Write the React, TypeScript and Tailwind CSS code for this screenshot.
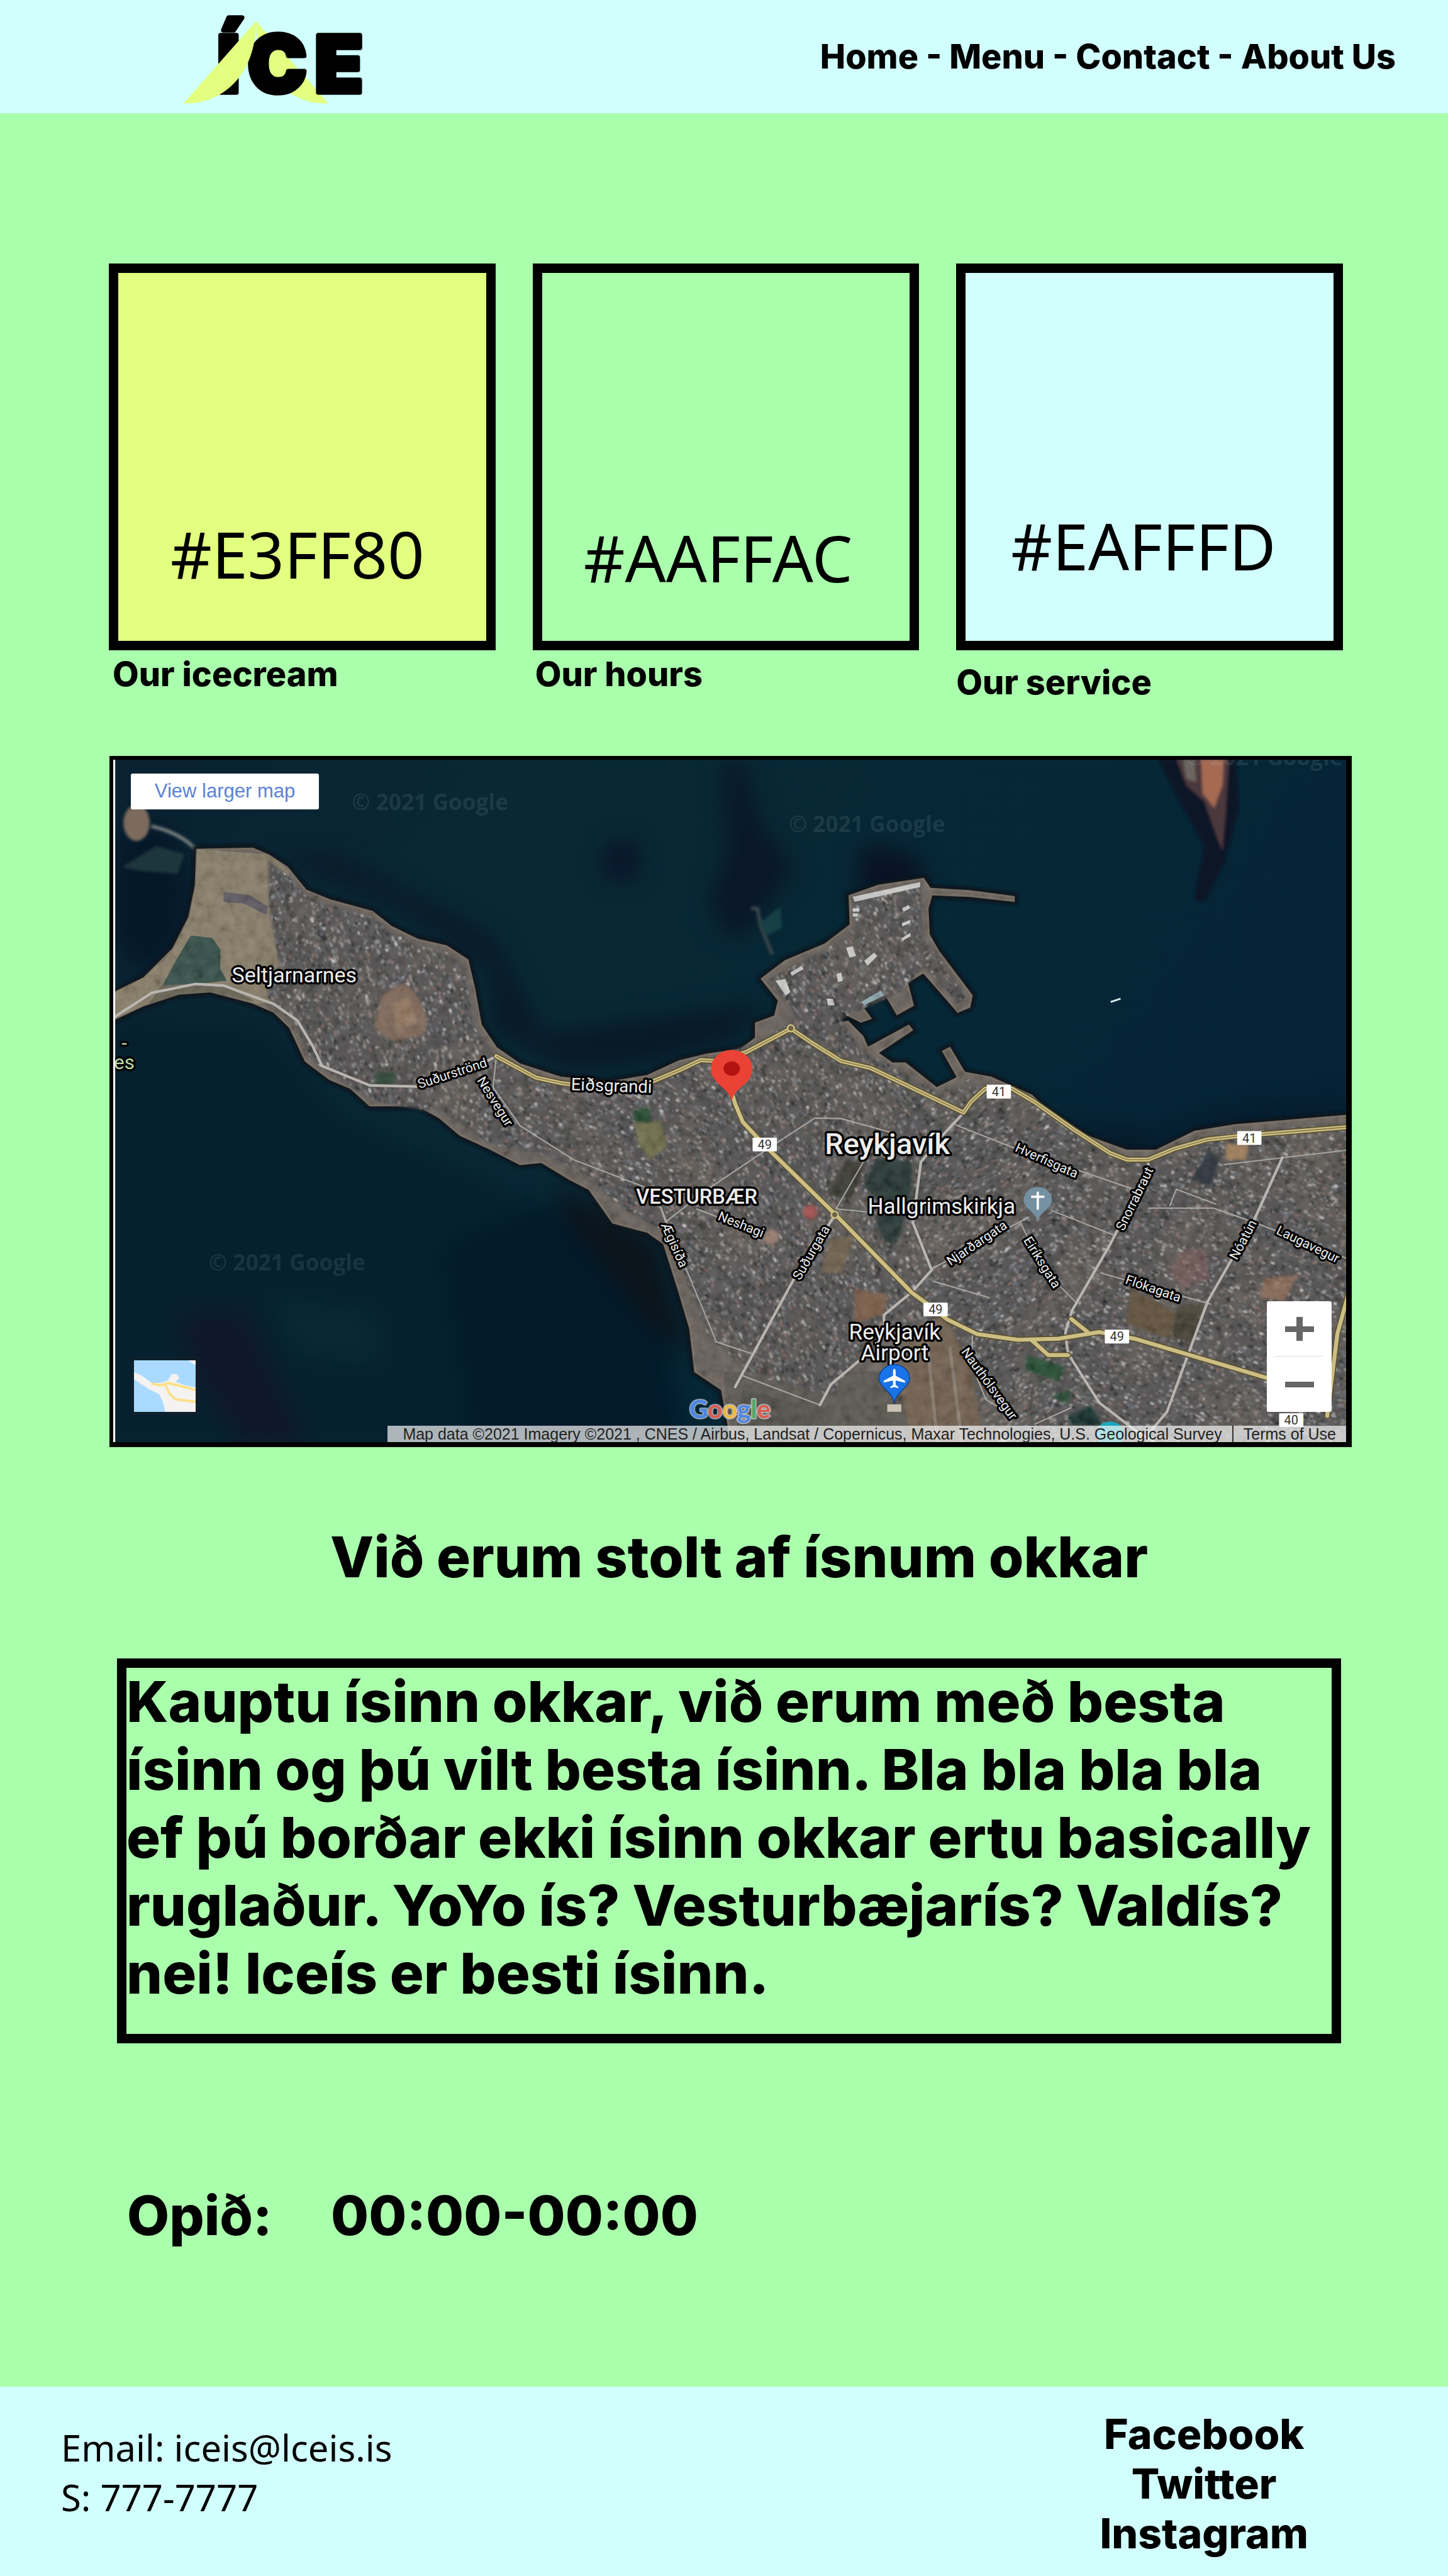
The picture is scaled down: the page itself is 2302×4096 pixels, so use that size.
import React from "react";

type Swatch = { hex: string; caption: string; box: string; label: string };

const swatches: Swatch[] = [
  { hex: "#E3FF80", caption: "Our icecream", box: "bg-[#E2FF80] pl-[83px] pb-[78px]", label: "mt-2 pl-[6px]" },
  { hex: "#AAFFAC", caption: "Our hours", box: "bg-[#AAFFAC] pl-[66px] pb-[72px]", label: "mt-2 pl-[4px]" },
  { hex: "#EAFFFD", caption: "Our service", box: "bg-[#D1FFFD] pl-[72px] pb-[91px]", label: "mt-[21px]" },
];

const navItems = ["Home", "Menu", "Contact", "About Us"];
const socials = ["Facebook", "Twitter", "Instagram"];

function Logo() {
  return (
    <svg viewBox="160 60 1220 630" className="h-[151px] w-[293px] overflow-visible" role="img" aria-label="ÍCE">
      <path d="M647 138 L1128 684 C874 690 647 500 647 138Z" fill="#E2FF80" />
      <g
        fontFamily="Inter, sans-serif"
        fontWeight="900"
        fontSize="524"
        fill="#000"
        stroke="#000"
        strokeWidth="32"
        strokeLinejoin="round"
        textAnchor="middle"
      >
        <text x="464" y="610">Í</text>
        <text x="788" y="610">C</text>
        <text x="1197" y="610">E</text>
      </g>
      <path d="M647 138 L166 684 C420 690 647 500 647 138Z" fill="#E2FF80" />
    </svg>
  );
}

/* ---------- Satellite map ---------- */

const coast =
  "M66 606 L87.5 595.4 L105.3 577.6 L115 558.4 L119 539 L119.8 517.3 L132.7 517 L153.7 516.6 L163.4 520.7 L174.7 528 L186 542 L200.6 548 L226.4 555 L237.7 564 L254 572 L271.6 576 L284.5 584.4 L288.6 602 L292.6 624 L302 638 L316.5 648 L341 656 L370 659 L394 655 L413.5 646 L430 642 L450.6 639 L460 632 L460 623 L471.6 618.7 L474 609 L463.6 596 L478 585 L502 575 L517.7 563 L517 545.4 L534.6 539.2 L562 535 L566 541 L590 542.5 L617 546 L617 548.5 L590 545.5 L567 544.5 L564.5 553 L565.3 569 L571 579 L591.4 606 L590 613 L583 616 L570 601 L562 592 L552 598 L555.6 612 L546 617.3 L539.5 606.3 L523.3 611 L529.8 620 L524 622 L512 616 L506 624 L516 622 L525 631 L528 638 L553 624.5 L555 627 L534 641 L543 647.4 L551 647.4 L570 662.5 L583 656 L574 640 L578 638 L587 653 L603 656 L612 660 L628 667 L636 675 L661 691.5 L685.5 700.5 L703.7 700.5 L727 689 L751.6 685 L822 679 L822 882 L446 882 L439.3 846 L423 835 L420 809 L413.5 787 L404 757 L394 750 L373 744.4 L358.6 724 L347 718 L329.5 707.4 L316.5 708.8 L297.5 699 L280 691 L267 680 L254 673 L225 673 L213.5 662.5 L200.6 657 L186 646 L176.4 625.5 L166.7 616 L153.7 610.4 L128 603.6 L108.5 605 L87.5 612 L66 622Z";

const urban =
  "M163 524 L174 532 L186 545 L200 551 L226 558 L238 567 L254 575 L271 579 L282 587 L285 603 L289 626 L300 641 L316 652 L341 660 L370 663 L394 659 L430 645 L462 634 L484 620 L478 609 L466 597 L502 578 L520 565 L519 547 L560 538 L562 570 L588 606 L584 612 L562 588 L548 604 L512 620 L524 640 L545 650 L570 665 L590 657 L628 670 L661 695 L686 704 L704 704 L727 693 L752 689 L822 683 L822 882 L600 882 L590 830 L575 800 L545 812 L520 830 L505 850 L452 836 L430 812 L418 780 L408 752 L380 736 L352 713 L330 703 L300 697 L270 678 L226 670 L205 656 L190 646 L180 625 L162 606 L170 588 L164 553Z";

const buildingColors = [
  { color: "#9c9a98", share: 0.17 },
  { color: "#cccccc", share: 0.06 },
  { color: "#7d7b79", share: 0.2 },
  { color: "#262b2d", share: 0.22 },
  { color: "#383d36", share: 0.14 },
  { color: "#7d6560", share: 0.1 },
  { color: "#636b74", share: 0.12 },
];

function makeRandom(seed: number) {
  let s = seed;
  return () => {
    s = (s * 1664525 + 1013904223) % 4294967296;
    return s / 4294967296;
  };
}

// One path per roof colour; blocks follow the street direction of their quarter.
const buildingPaths = buildingColors.map(({ color, share }, i) => {
  const rnd = makeRandom(97 + i * 31);
  const count = Math.round(32000 * share);
  let d = "";
  for (let n = 0; n < count; n++) {
    const x = 160 + rnd() * 662;
    const y = 524 + rnd() * 356;
    const angle = x < 300 ? 1.2 : x < 440 ? 0.5 : x < 560 ? 1.05 : x < 640 ? -0.5 : 0.35;
    const w = 0.9 + rnd() * 2.1;
    const h = 0.6 + rnd() * 1.1;
    const cx = Math.cos(angle);
    const sx = Math.sin(angle);
    d += `M${x.toFixed(1)} ${y.toFixed(1)}l${(cx * w).toFixed(2)} ${(sx * w).toFixed(2)}l${(-sx * h).toFixed(2)} ${(cx * h).toFixed(2)}l${(-cx * w).toFixed(2)} ${(-sx * w).toFixed(2)}z`;
  }
  return { color, d };
});

const mainRoads = [
  "M302 643 L326 656 L342 659.5 L370 663 L397 658.4 L413.5 651.5 L426.4 645.4 L436 646 L454 640.6 L481.3 626.2 L494.3 635 L512 646 L529.8 650.2 L570 669.4 L586.4 677.3 L591 670.7 L599.6 662.8 L616 662.8 L629.4 670.7 L652.5 687 L675.6 702 L686 706 L698.8 706 L715.3 699.2 L735 693.7 L753.3 691.7 L822 686",
  "M445 664 L447.4 672 L452 683 L465 697 L508 739 L555 787 L566 795 L576.5 803.3 L594.7 812.2 L619.5 815.7 L644.2 815 L669 811 L690.5 815 L771.4 839 L800 850",
  "M822 783 L814 812 L807.8 862",
  "M628 816 L638 825 L650 825 M652 803 L662 811",
];

const wideStreets = [
  "M508 740 L484.6 776 L447.4 844.4",
  "M698.8 707 L698.8 711.5 L676 757 L652.5 797.8 L648.4 811.5 L650 824 L669 854 L690.5 870.5 L706 880",
  "M780.5 704.7 L763.2 743 L735 792.4 L710.3 859.5 L698 874",
  "M586 678 L572 693 L560.5 707.4 L555.6 744.4 L567 773.2 L555.6 786 L538 800.6 L538 806",
  "M499 855.4 L505.6 843 L523.3 828",
  "M69 619.5 L92.4 604.4 L119 599 L136 600 L166.7 611.3 L181 621.4 L190 636.5 L196 649 L225 660.8 L254 661.5 L283 653 L302 643",
];

const smallStreets = [
  "M402 734.8 L416.7 770.4 L436 817 L457 824",
  "M302 643 L300 662 L316.6 685.5 L349 706 L395.7 724 L402 735 L405 744 L430 724.5 L471.6 696.5 L495.9 680.7 L512 681 L542.7 689.6",
  "M452 837.6 L499 855.4",
  "M528 703 L508.8 736 L530 738",
  "M698.8 735.5 L738.4 735.5 L763 744 L822 767",
  "M712 734 L716 724 L740 733",
  "M745 709 L822 700",
  "M582 685 L620 700 L690 724",
  "M640 737 L678 752 M568 772 L626 741",
  "M621 744 L634 772 L655 793",
  "M568 780 L602 790 M670 775 L737 794",
  "M592 812 L591 830 L600 852 L616 862",
  "M424 736 L447 745 L462 754",
  "M630 867 L652 857",
];

type MapLabel = { text: string; x: number; y: number; size: number; rotate?: number; weight?: number };

const mapLabels: MapLabel[] = [
  { text: "Seltjarnarnes", x: 179, y: 598, size: 13 },
  { text: "Reykjavík", x: 540, y: 702.5, size: 18, weight: 500 },
  { text: "VESTURBÆR", x: 424, y: 733, size: 12.5, weight: 500 },
  { text: "Hallgrimskirkja", x: 573, y: 739, size: 13.5 },
  { text: "Reykjavík", x: 544.5, y: 815.5, size: 13.5 },
  { text: "Airport", x: 544.5, y: 828, size: 13.5 },
  { text: "Eiðsgrandi", x: 372, y: 664.5, size: 10.5, rotate: 2 },
  { text: "Suðurströnd", x: 276, y: 656, size: 8, rotate: -18 },
  { text: "Nesvegur", x: 299, y: 672, size: 8, rotate: 58 },
  { text: "Neshagi", x: 450, y: 748, size: 8, rotate: 22 },
  { text: "Ægisíða", x: 408, y: 759, size: 8, rotate: 66 },
  { text: "Suðurgata", x: 496, y: 764, size: 8, rotate: -60 },
  { text: "Hverfisgata", x: 636, y: 709, size: 8, rotate: 24 },
  { text: "Snorrabraut", x: 693, y: 731, size: 8, rotate: -64 },
  { text: "Njarðargata", x: 596, y: 759, size: 8, rotate: -34 },
  { text: "Eiríksgata", x: 632, y: 770, size: 8, rotate: 58 },
  { text: "Nóatún", x: 759, y: 756, size: 8, rotate: -62 },
  { text: "Flókagata", x: 701, y: 787, size: 8, rotate: 19 },
  { text: "Laugavegur", x: 795, y: 760, size: 8, rotate: 26 },
  { text: "Nauthólsvegur", x: 600, y: 844, size: 8, rotate: 54 },
];

const shields = [
  { text: "49", x: 458, y: 692.6 },
  { text: "41", x: 600.5, y: 660.4 },
  { text: "41", x: 753, y: 688.6 },
  { text: "49", x: 562, y: 793 },
  { text: "49", x: 672.4, y: 809.5 },
  { text: "40", x: 778.5, y: 860.4 },
];

const watermarks = [
  { x: 214, y: 493 },
  { x: 480, y: 506.5 },
  { x: 127, y: 773.5 },
  { x: 722, y: 466 },
];

function SatelliteMap() {
  return (
    <svg viewBox="68.8 462.5 750.5 415.5" className="block h-auto w-full" role="img" aria-label="Satellite map of Reykjavík">
      <defs>
        <linearGradient id="sea" x1="0" y1="0" x2="1" y2="0.4">
          <stop offset="0" stopColor="#0a2131" />
          <stop offset="0.35" stopColor="#092835" />
          <stop offset="0.7" stopColor="#062736" />
          <stop offset="1" stopColor="#052437" />
        </linearGradient>
        <filter id="soft" x="-30%" y="-30%" width="160%" height="160%" colorInterpolationFilters="sRGB">
          <feGaussianBlur stdDeviation="7" />
        </filter>
        <filter id="edge" x="-10%" y="-10%" width="120%" height="120%">
          <feGaussianBlur stdDeviation="0.9" />
        </filter>
        <filter id="haze">
          <feGaussianBlur stdDeviation="0.35" />
        </filter>
        <filter id="grain" x="0" y="0" width="100%" height="100%">
          <feTurbulence type="fractalNoise" baseFrequency="0.16" numOctaves="3" seed="8" />
          <feColorMatrix values="0.9 0.5 0.2 0 -0.42  0.9 0.5 0.2 0 -0.42  0.9 0.5 0.2 0 -0.42  0 0 0 0 0.5" />
        </filter>
        <filter id="patches" x="0" y="0" width="100%" height="100%">
          <feTurbulence type="fractalNoise" baseFrequency="0.022" numOctaves="3" seed="21" />
          <feColorMatrix values="0 0 0 0 0.2  0 0 0 0 0.16  0 0 0 0 0.12  3 0 0 0 -1.35" />
        </filter>
        <clipPath id="coastClip"><path d={coast} /></clipPath>
        <clipPath id="urbanClip"><path d={urban} /></clipPath>
      </defs>

      <rect x="60" y="455" width="770" height="430" fill="url(#sea)" />
      <g filter="url(#soft)">
        <path d="M60 620 L160 625 L210 680 L290 715 L350 740 L400 790 L420 880 L250 880 L60 880Z" fill="#06202f" />
        <path d="M330 735 L395 765 L415 880 L290 880 L270 760Z" fill="#021a2a" />
        <ellipse cx="90" cy="545" rx="24" ry="45" fill="#05182a" />
        <path d="M170 520 L240 550 L300 590 L300 625 L345 650 L400 645 L450 630 L465 610 L440 615 L330 630 L300 570 L200 520Z" fill="#0a1826" />
        <path d="M440 462 L452 462 L462 500 L484 530 L470 545 L455 570 L440 568 L432 548 L443 520Z" fill="#0a1728" />
        <ellipse cx="378" cy="524" rx="11" ry="13" fill="#0b1329" />
        <path d="M525 515 L555 520 L566 540 L522 545Z" fill="#0a1124" />
        <path d="M110 800 L150 800 L165 835 L185 880 L150 880 L118 835Z" fill="#10172a" />
        <path d="M335 720 L400 755 L420 830 L390 800 L350 750Z" fill="#0c141b" />
        <path d="M640 680 L690 702 L720 690 L760 682 L822 675 L822 668 L750 675 L700 690Z" fill="#071727" />
        <path d="M165 790 L230 800 L230 830 L180 825Z" fill="#07303a" opacity="0.5" />
      </g>
      <g filter="url(#edge)">
        <ellipse cx="83" cy="501" rx="8" ry="11" fill="#7d6a5d" />
        <path d="M74 528 L95 515 L112 520 L108 532 L84 530Z" fill="#2e4849" opacity="0.6" />
        <path d="M92 503 Q110 507 120 518" fill="none" stroke="#7e8482" strokeWidth="2" />
        <path d="M705 462 L752 462 L754 492 L745 526 L733 549 L727 548 L733 515 L718 488Z" fill="#0d1428" />
        <path d="M716 462 L748 462 L746 495 L744 518 L740 508 L733 488 L722 478Z" fill="#4b383c" />
        <path d="M731 462 L745 462 L744 478 L739 492 L732 483Z" fill="#a66a52" />
        <path d="M720 462 L727 463 L728 476 L722 474Z" fill="#6d6660" />
        <path d="M457 553 L461 553 L463 564 L470 581" stroke="#3d484d" strokeWidth="2" fill="none" />
        <path d="M462 562 L475 552 L476 565 L466 570Z" fill="#133f44" />
      </g>
      <path d="M676 610 L682 608" stroke="#d7ecec" strokeWidth="1.1" />

      <path d={coast} fill="#10171c" filter="url(#edge)" stroke="#10171c" strokeWidth="5" />
      <path d={coast} fill="#655d56" stroke="#73695f" strokeWidth="1.2" />
      <g clipPath="url(#coastClip)">
        <path d="M119 517 L163 520 L176 530 L168 560 L171 588 L158 594 L165 610 L66 625 L66 605 L100 585 L116 555Z" fill="#857a65" />
        <path d="M116 569.5 L129 571 L134 578 L134 590 L138 597 L120 599 L98.8 600 L108 583Z" fill="#2c4840" />
        <path d="M98 600 L120 600 L138 601 L156 610 L128 605 L90 612Z" fill="#635f4e" />
        <path d="M136 543 L152 545 L163 552 L162 557 L148 550 L136 549Z" fill="#56525a" />
        <path d="M440 835 L600 835 L600 882 L446 882Z" fill="#55514a" />
        <path d="M552 800 L575 798 L592 825 L602 882 L556 882 L548 845Z" fill="#6c5a48" />
        <path d="M452 846 L498 858 L510 882 L446 882Z" fill="#4c4a44" />
        <path d="M564 815 L571 882 M578 820 L586 882" stroke="#85776a" strokeWidth="2" fill="none" />
      </g>
      <path d={urban} fill="#4d4c4b" filter="url(#edge)" />
      <g clipPath="url(#urbanClip)">
        <g filter="url(#haze)">
          {buildingPaths.map((b) => (
            <path key={b.color} d={b.d} fill={b.color} />
          ))}
        </g>
        <rect x="68" y="510" width="752" height="370" filter="url(#patches)" opacity="0.3" />
      </g>
      <g filter="url(#edge)">
        <path d="M232 606 L246 598 L254 606 L260 620 L258 630 L240 634 L228 626Z" fill="#7b6453" />
        <path d="M238 612 L248 606 L254 622 L242 627Z" fill="#8f735d" />
        <path d="M228 653 L241 653 L240 660 L229 661Z" fill="#26402f" />
        <path d="M533 705 L555 707 L555 722 L548 750 L546 757 L538 756 L534 745 L537 735 L526 722Z" fill="#1c2f2c" />
        <path d="M515 706 L527 708 L518 730 L503 728Z" fill="#32302a" />
        <path d="M386 684 L402 682 L406 698 L395 706 L388 695Z" fill="#6b6a45" />
        <path d="M385 676 L395 674 L396 684 L386 683Z" fill="#1e4225" />
        <path d="M625 825 L648 832 L644 841 L624 834Z M640 850 L652 846 L650 855Z" fill="#1f4429" />
        <path d="M650 862 L664 856 L672 868 L652 868Z" fill="#0d2c27" />
        <path d="M688 785 L700 790 L716 800 L712 815 L686 806Z" fill="#5c4c35" />
        <path d="M716 795 L732 794 L726 818 L714 814Z" fill="#3e392b" />
        <path d="M746 696 L760 697 L758 706 L746 706Z" fill="#a07b55" />
        <path d="M770 778 L790 776 L782 792 L766 790Z" fill="#8d6850" opacity="0.8" />
        <path d="M520 785 L540 788 L538 800 L520 806Z" fill="#755641" />
        <path d="M505 755 L520 752 L512 775 L500 775Z" fill="#6a5a45" />
        <path d="M718 762 L734 760 L736 778 L720 784 L712 776Z" fill="#7a5552" opacity="0.6" />
        <circle cx="493" cy="738" r="4.5" fill="#a34e4c" />
        <circle cx="469" cy="753" r="4.5" fill="#97796a" />
        <path d="M736 700 L742 706 L737 722 L725 718Z" fill="#222c33" />
      </g>
      <g fill="#cfcfcd">
        <path d="M472 597 L478 596 L481 604 L478 606Z M519 546 L560 537 L560 540 L520 549Z M515 577 L519 576 L521 582 L517 583Z M526 585 L532 580 L534 582 L528 588Z M509 593 L512 592 L513 597 L510 598Z M481 592 L488 588 L489 590 L482 594Z M503 608 L507 608 L508 612 L504 612Z M519 553 h4v2h-4z M519 556 h3v2h-3z M549 553 l4 -2 l1 2 l-4 2z M549 562 l5 -2 l0 2 l-5 2z M549 571 l5 -3 l0 2 l-5 3z" />
        <path d="M524 610 L536 603 L538 606 L526 612Z" fill="#8fa9ae" />
      </g>
      <rect x="68" y="510" width="752" height="370" clipPath="url(#coastClip)" filter="url(#grain)" opacity="0.3" />

      <g fill="none" strokeLinejoin="round" strokeLinecap="round">
        {smallStreets.map((d) => (
          <path key={d} d={d} stroke="#a9a6a2" strokeWidth="0.8" />
        ))}
        {wideStreets.map((d) => (
          <path key={d} d={d} stroke="#b9b5b0" strokeWidth="1.6" />
        ))}
        {mainRoads.map((d) => (
          <path key={d} d={d} stroke="#5b5235" strokeWidth="3.8" />
        ))}
        {mainRoads.map((d) => (
          <path key={d} d={d} stroke="#cdbf83" strokeWidth="2.4" />
        ))}
        <path d={mainRoads[0]} stroke="#7c6f45" strokeWidth="0.5" />
      </g>
      <circle cx="481.3" cy="626" r="2" fill="#6b6248" stroke="#cdbf83" />
      <circle cx="508" cy="739.5" r="2" fill="#6b6248" stroke="#cdbf83" />

      <g fontFamily="'Open Sans', sans-serif" fontWeight="700" fontSize="13.5" fill="#b8d0d8" opacity="0.11">
        {watermarks.map((w) => (
          <text key={w.x} x={w.x} y={w.y}>© 2021 Google</text>
        ))}
      </g>

      <g fontFamily="Roboto, sans-serif" fill="#ededed" stroke="#000" strokeWidth="2.6" strokeLinejoin="round" paintOrder="stroke" textAnchor="middle">
        {mapLabels.map((l) => (
          <text
            key={`${l.text}${l.x}`}
            x={l.x}
            y={l.y}
            fontSize={l.size}
            fontWeight={l.weight ?? 400}
            transform={l.rotate ? `rotate(${l.rotate} ${l.x} ${l.y})` : undefined}
          >
            {l.text}
          </text>
        ))}
        <g fill="#b9dba6" fontSize="12">
          <text x="75.5" y="639">-</text>
          <text x="75.5" y="651">es</text>
        </g>
      </g>

      {shields.map((s) => (
        <g key={`${s.x}`}>
          <rect x={s.x} y={s.y} width="14.8" height="8.4" rx="0.5" fill="#fff" />
          <text x={s.x + 7.4} y={s.y + 7} textAnchor="middle" fontFamily="Roboto, sans-serif" fontSize="7.6" fill="#333">
            {s.text}
          </text>
        </g>
      ))}

      <path d="M445.3 670.5 C444 662 432.6 660 432.6 650.6 A12.7 11.4 0 0 1 458 650.6 C458 660 446.6 662 445.3 670.5Z" fill="#ea4335" />
      <ellipse cx="445.3" cy="650.6" rx="5" ry="4.4" fill="#b31412" />

      <path d="M631.6 744 C631 738 623 736 623 730.6 A8.6 8 0 0 1 640.2 730.6 C640.2 736 632.2 738 631.6 744Z" fill="#7590a0" />
      <path d="M631.6 725.5 V736.5 M627.6 728.6 H635.6" stroke="#fff" strokeWidth="1.4" />

      <path d="M544.3 855 C543.6 847 535 845 535 839.3 A9.3 8.6 0 0 1 553.6 839.3 C553.6 845 545 847 544.3 855Z" fill="#1a73e8" stroke="#0b3f8c" strokeWidth="0.5" />
      <path
        d="M544.3 833.2 Q543.5 833.6 543.5 835 V837.6 L537.8 840.6 V841.8 L543.5 840.4 V843.2 L541.9 844.3 V845.1 L544.3 844.5 L546.7 845.1 V844.3 L545.1 843.2 V840.4 L550.8 841.8 V840.6 L545.1 837.6 V835 Q545.1 833.6 544.3 833.2Z"
        fill="#fff"
      />
      <rect x="540" y="855" width="8.5" height="4.5" fill="#cbc3b4" />
      <ellipse cx="675.6" cy="873" rx="8.4" ry="7.6" fill="#1aa9bb" />

      <text x="419.5" y="863.5" fontFamily="Lato, sans-serif" fontWeight="700" fontSize="15.5" stroke="#e9eef2" strokeOpacity="0.65" strokeWidth="1.4" strokeLinejoin="round" paintOrder="stroke">
        <tspan fill="#4c86e6">G</tspan>
        <tspan fill="#dc5a4e">o</tspan>
        <tspan fill="#efbb3a">o</tspan>
        <tspan fill="#4c86e6">g</tspan>
        <tspan fill="#4fa866">l</tspan>
        <tspan fill="#dc5a4e">e</tspan>
      </text>

      <rect x="68.8" y="462" width="1.2" height="417" fill="#fff" />
    </svg>
  );
}

function MapThumbnail() {
  return (
    <svg viewBox="0 0 98 82" className="block h-full w-full" aria-hidden="true" preserveAspectRatio="none">
      <rect width="98" height="82" fill="#aadaff" />
      <path d="M0 19 L12 24 L28 36 L42 36 L54 32 L60 22 L68 22 L72 28 L66 34 L82 40 L98 43 V82 H50 L46 66 L40 54 L24 46 L0 30Z" fill="#f4f3f1" />
      <path d="M86 0 H98 V8Z" fill="#f4f3f1" />
      <path d="M28 37 L42 40 L54 36 L70 40 L98 47 M50 39 L56 52 L66 62 L98 66" fill="none" stroke="#fbe08c" strokeWidth="4" />
    </svg>
  );
}

function MapPanel() {
  return (
    <section
      aria-label="Map"
      className="relative mt-[87px] mr-[153px] ml-[174px] border-t-[6px] border-r-[9px] border-b-8 border-l-[6px] border-black"
    >
      <SatelliteMap />
      <a
        href="#map"
        className="absolute top-[22px] left-[28px] flex h-[57px] w-[299px] items-center justify-center rounded-[3px] bg-white font-['Liberation_Sans',Arial,sans-serif] text-[31px] text-[#5b83d6]"
      >
        View larger map
      </a>
      <button
        type="button"
        aria-label="Show street map"
        className="absolute bottom-[48px] left-[33px] h-[82px] w-[98px] shadow-[0_0_0_5px_#2224]"
      >
        <MapThumbnail />
      </button>
      <div className="absolute right-[23px] bottom-[48px] flex h-[176px] w-[103px] flex-col rounded-[3px] bg-white">
        <button type="button" aria-label="Zoom in" className="flex flex-1 items-center justify-center">
          <svg viewBox="0 0 46 38" className="h-[38px] w-[46px]" aria-hidden="true">
            <path d="M18 0 h10 v15 h18 v9 h-18 v14 h-10 v-14 h-18 v-9 h18z" fill="#666" />
          </svg>
        </button>
        <div className="mx-[13px] h-px bg-[#ddd]" />
        <button type="button" aria-label="Zoom out" className="flex flex-1 items-center justify-center">
          <svg viewBox="0 0 46 9" className="h-[9px] w-[46px]" aria-hidden="true">
            <rect width="46" height="9" fill="#666" />
          </svg>
        </button>
      </div>
      <div className="absolute right-0 bottom-0 flex h-[26px] items-center bg-[#f5f5f5]/70 font-['Liberation_Sans',Arial,sans-serif] text-[25px] leading-[26px] text-[#222]">
        <span className="pr-[16px] pl-[24px] whitespace-nowrap">
          Map data ©2021 Imagery ©2021 , CNES / Airbus, Landsat / Copernicus, Maxar Technologies, U.S. Geological Survey
        </span>
        <a href="#terms" className="border-l-2 border-[#333] px-[16px] whitespace-nowrap">
          Terms of Use
        </a>
      </div>
    </section>
  );
}

export default function App() {
  return (
    <div className="flex min-h-screen flex-col bg-[#AAFFAC] font-['Inter',sans-serif] text-black">
      <header className="flex h-[180px] items-center justify-between bg-[#D1FFFD] pr-[83px] pl-[290px]">
        <Logo />
        <nav aria-label="Main" className="text-[54px] leading-[60px] font-extrabold whitespace-nowrap">
          {navItems.map((item, i) => (
            <React.Fragment key={item}>
              {i > 0 && " - "}
              <a href={`#${item.toLowerCase().replace(" ", "-")}`}>{item}</a>
            </React.Fragment>
          ))}
        </nav>
      </header>

      <main className="flex-1 pt-[239px] pb-[223px]">
        <section aria-label="Overview" className="grid grid-cols-3 gap-[59px] pr-[167px] pl-[173px]">
          {swatches.map((s) => (
            <figure key={s.hex}>
              <div className={`flex aspect-square items-end border-[15px] border-black ${s.box}`}>
                <span className="font-['Noto_Sans',sans-serif] text-[102px] leading-[120px]">{s.hex}</span>
              </div>
              <figcaption className={`text-[54px] leading-[60px] font-extrabold ${s.label}`}>{s.caption}</figcaption>
            </figure>
          ))}
        </section>

        <MapPanel />

        <h1 className="mt-[127px] ml-[525px] text-[90px] leading-[96px] font-extrabold whitespace-nowrap">
          Við erum stolt af ísnum okkar
        </h1>

        <p className="mt-[113px] mr-[170px] ml-[186px] border-[15px] border-black pb-[42px] text-[90px] leading-[108px] font-extrabold">
          Kauptu ísinn okkar, við erum með besta
          <br />
          ísinn og þú vilt besta ísinn. Bla bla bla bla
          <br />
          ef þú borðar ekki ísinn okkar ertu basically
          <br />
          ruglaður. YoYo ís? Vesturbæjarís? Valdís?
          <br />
          nei! Iceís er besti ísinn.
        </p>

        <dl className="mt-[226px] ml-[202px] flex text-[87px] leading-[96px] font-extrabold">
          <dt className="w-[324px]">Opið:</dt>
          <dd>00:00-00:00</dd>
        </dl>
      </main>

      <footer className="flex items-start justify-between bg-[#D1FFFD] pt-[36px] pr-[222px] pb-[28px] pl-[97px]">
        <address className="pt-[21px] font-['Noto_Sans',sans-serif] text-[58px] leading-[79px] not-italic">
          <div>
            Email: <a href="mailto:iceis@lceis.is">iceis@lceis.is</a>
          </div>
          <div>
            S: <a href="tel:7777777">777-7777</a>
          </div>
        </address>
        <ul className="text-center text-[66px] leading-[79px] font-extrabold">
          {socials.map((s) => (
            <li key={s}>
              <a href={`#${s.toLowerCase()}`}>{s}</a>
            </li>
          ))}
        </ul>
      </footer>
    </div>
  );
}
